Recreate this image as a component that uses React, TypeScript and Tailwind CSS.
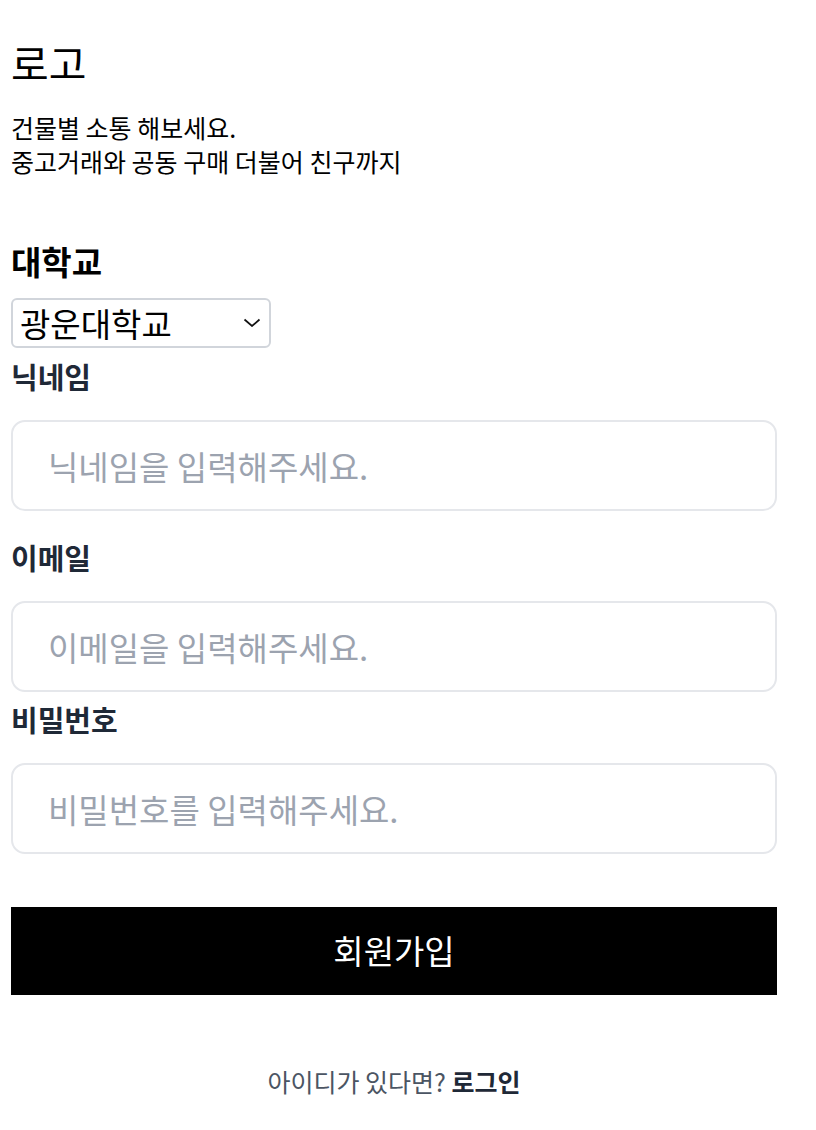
import { useState } from "react";

const font = { fontFamily: '"Noto Sans CJK KR", "Noto Sans", sans-serif' };

type FieldProps = {
  label: string;
  placeholder: string;
  type?: string;
  className?: string;
};

function Field(props: FieldProps) {
  const { label, placeholder, type = "text", className = "" } = props;
  return (
    <div className={className}>
      <label className="block text-[29px] font-semibold leading-[38px] text-[#1f2937]">
        {label}
      </label>
      <input
        type={type}
        placeholder={placeholder}
        className="mt-[25px] block h-[91px] w-full rounded-[14px] border-2 border-[#e5e7eb] px-[35px] text-[33px] text-[#111827] outline-none placeholder:text-[#9ca3af]"
      />
    </div>
  );
}

const App = () => {
  const [school, setSchool] = useState("광운대학교");

  return (
    <div className="min-h-[1130px] bg-white text-black" style={font}>
      <div className="ml-[11px] w-[766px] pt-[34px]">
        <h1 className="text-[41px] font-normal leading-[56px]">로고</h1>
        <p className="mt-[20px] text-[25px] leading-[34px]">
          건물별 소통 해보세요.
          <br />
          중고거래와 공동 구매 더불어 친구까지
        </p>

        <h3 className="mt-[61px] text-[33px] font-bold leading-[44px]">대학교</h3>
        <div className="relative mt-[15px] w-[260px]">
          <select
            value={school}
            onChange={(ev) => setSchool(ev.target.value)}
            className="block h-[50px] w-full appearance-none rounded-[6px] border-2 border-[#d1d5db] bg-white pl-[7px] text-[33px] leading-[44px] text-black outline-none"
          >
            <option>광운대학교</option>
            <option>서울대학교</option>
            <option>연세대학교</option>
          </select>
          <svg
            className="pointer-events-none absolute right-[10px] top-[20px]"
            width="18"
            height="9"
            viewBox="0 0 18 9"
            fill="none"
          >
            <path d="M1.5 1.5l7.5 6.5 7.5-6.5" stroke="#111" strokeWidth="1.7" />
          </svg>
        </div>

        <Field label="닉네임" placeholder="닉네임을 입력해주세요." className="mt-[9px]" />
        <Field label="이메일" placeholder="이메일을 입력해주세요." className="mt-[27px]" />
        <Field
          label="비밀번호"
          type="password"
          placeholder="비밀번호를 입력해주세요."
          className="mt-[8px]"
        />

        <button className="mt-[53px] flex h-[88px] w-full items-center justify-center bg-black text-[33px] text-white">
          회원가입
        </button>

        <p className="mt-[68px] text-center text-[25px] text-[#4b5563]">
          아이디가 있다면?{" "}
          <a href="#" className="font-semibold text-[#1f2937]">
            로그인
          </a>
        </p>
      </div>
    </div>
  );
};

export default App;
